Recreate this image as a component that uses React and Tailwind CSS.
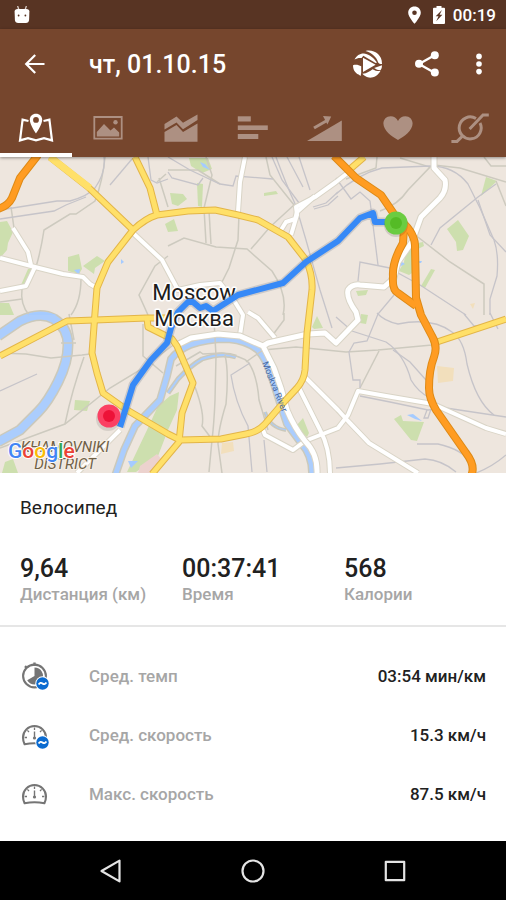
import { useState } from 'react';

// Map geometry, drawn from the bottom layer to the top
const rivers = [
  { d: 'M-2 336 L20 321 Q40 311 54 319 Q68 328 68 345 Q68 362 58 382 Q48 402 38 412 L20 430 L-2 442', w: 8 },
  { d: 'M115 476 L124 450 L135 426 L160 400 L167 376 L171 359 Q178 350 190 345 Q206 339 228 339 Q248 341 258 350 Q268 362 272 378 L280 403 L287 424 L301 443 Q313 456 312 476', w: 5 },
  { d: 'M168 393 L178 379 Q190 366 202 359 Q222 352 236 357', w: 2 },
  { d: 'M265 412 Q270 428 286 430', w: 1 },
];

const parks = [
  'M0 222 L7 221 L13 232 L8 243 L7 250 L0 258Z',
  'M68 257 L79 254 L82 269 L79 274 L68 271Z',
  'M83 266 L97 256 L105 261 L95 268 L94 274Z',
  'M28 269 L34 267 L26 285 L21 285Z',
  'M0 303 L9 303 L14 315 L0 315Z',
  'M165 224 L174 219 L178 231 L168 232Z',
  'M170 193 L183 194 L187 199 L178 206 L172 204Z',
  'M197 183 L203 184 L202 207 L198 206Z',
  'M189 158 L208 158 L212 169 L202 173 L191 166Z',
  'M264 193 L276 191 L278 194 L264 196Z',
  'M486 177 L497 181 L481 196Z',
  'M447 229 L458 220 L469 236 L463 250 L457 251 L456 242Z',
  'M407 245 L423 242 L424 246 L416 250 L417 270 L409 275 L399 271 L404 262Z',
  'M421 286 L431 269 L435 270 L425 288Z',
  'M356 291 L368 290 L366 295 L358 296Z',
  'M361 314 L368 315 L366 324 L360 323Z',
  'M312 327 L317 316 L323 328 L314 329Z',
  'M394 419 L401 415 L403 421 L424 422 L417 441 L411 440Z',
  'M75 400 L90 401 L87 411 L74 410Z',
  'M158 406 L170 396 L179 392 L177 410 L168 430 L158 456 L136 472 L127 472 L147 430Z',
  'M297 425 L303 418 L309 433 L307 437 L299 431Z',
  'M5 462 L13 459 L18 473 L2 473Z',
];

const ponds = [
  'M74 270 L80 269 L79 275Z',
  'M121 259 L124 262 L121 264Z',
  'M200 162 L205 164 L210 170 L203 167Z',
  'M399 260 L405 264 L399 267Z',
  'M418 261 L422 261 L421 263 L418 263Z',
  'M407 415 L413 414 L422 421 L415 419Z',
  'M128 461 L138 461 L131 468Z',
  'M26 315 Q40 309 57 315Z',
];

const yards = [
  'M437 366 L454 368 L453 381 L438 383Z',
  'M222 443 L233 442 L234 451 L221 454Z',
  'M470 304 L475 303 L473 309Z',
];

const railways = [
  'M104 157 Q106 172 95 188 Q88 196 70 201 L57 201 L0 210',
  'M86 197 L66 205 L54 211 L0 219',
  'M110 185 L132 159',
  'M148 157 L151 180 L157 183 L168 179',
  'M168 172 L172 178 L198 185 L203 178',
  'M168 157 L190 170 L220 184 L233 186 L236 176 L273 179',
  'M276 157 Q286 184 296 206 L306 240 L320 290 L332 328',
  'M272 157 L282 180 L302 207',
  'M287 157 L303 187 M299 157 L310 190',
  'M313 207 L326 203 L338 192 M314 209 L328 205 L338 196',
  'M336 194 Q358 174 382 168 L430 166 Q454 166 468 184 L480 208 L494 240 Q499 254 497 276 L490 299 L490 315',
  'M496 184 L478 197 L440 228 L431 245',
  'M478 200 L490 235 L506 252',
  'M336 178 L351 199 L360 192 L370 201 L378 265',
  'M358 281 L360 262 L390 268',
  'M398 273 L420 285 L466 315',
  'M394 295 L378 314 L367 341 L354 343 L349 352 L353 380 L360 380 L360 388',
  'M377 313 Q384 321 398 324 Q432 317 452 332 Q464 340 467 364 Q476 402 494 415',
  'M336 317 L352 331 L386 342 Q404 354 411 380 Q418 392 430 398',
  'M393 350 L410 362 L426 380',
  'M360 396 L390 402 L428 410 L446 408 L506 417',
  'M427 410 L424 418 L428 418 L431 409',
  'M417 444 L438 444 Q462 449 474 465',
  'M336 468 L380 464 L425 459 Q442 460 456 472',
  'M476 473 Q492 467 506 455',
  'M0 391 L37 374',
  'M250 363 L231 375 Q235 402 248 426 L252 472',
  'M264 440 L267 472',
  'M464 314 L474 326 L485 325 M490 313 L498 329',
];

const streets = [
  'M105 157 Q103 180 95 201 L76 214 L70 214 L44 230 Q41 250 36 267',
  'M11 207 L14 228',
  'M22 289 Q20 304 29 315',
  'M0 302 L22 299',
  'M81 278 Q81 302 71 315',
  'M168 256 L155 266 L139 295 L148 315',
  'M168 246 L184 238 L216 247 L247 249 L272 271 Q288 295 283 315',
  'M206 157 L212 175 L204 208 L206 243',
  'M209 211 L211 244',
  'M239 214 L238 240 L229 268 L218 290',
  'M266 157 L270 175 L294 205 L270 227 L251 249',
  'M168 170 L198 170 L220 184',
  'M0 353 L26 354 L51 358 L82 355 L90 354',
  'M84 357 Q72 390 65 424',
  'M0 448 L65 424 L110 388 L140 370 L180 340',
  'M61 343 L76 343 M69 314 L74 340',
  'M143 324 L143 356 L163 373',
  'M176 366 L200 352 L203 354 L222 353 Q242 356 248 362 Q257 374 259 400 L268 430',
  'M214 320 L216 356 L215 400 Q214 424 212 440 L209 472',
  'M195 387 Q205 414 202 426 L211 438',
  'M225 355 Q229 372 226 404 Q218 430 218 444 L222 473',
  'M280 338 L246 362 M272 336 L284 320 L284 313',
  'M263 350 L296 347 L346 352 L378 350 L432 345',
  'M379 351 L360 388',
  'M380 211 Q398 205 408 190 L430 167 L400 158',
  'M434 165 L460 168 L506 182',
  'M484 157 L491 166 L506 166 M496 181 L506 206',
  'M414 234 L450 262 L484 284 L484 315',
  'M377 157 L376 168 L346 179',
  'M157 182 L166 174 M159 178 L168 207',
];

const whiteRoads = [
  'M13 228 L28 252 L31 265',
  'M0 258 L35 267 L63 274 L83 277 L90 284 L97 288',
  'M35 267 L26 286 L0 291',
  'M133 233 L162 260 L170 275 L178 290 L200 285 L220 283 L235 302 L243 315 L240 335',
  'M245 157 L240 182 L238 212',
  'M350 171 L336 182 L315 197 L296 207 L297 215 L291 235',
  'M315 196 L297 212 L295 219 L286 222 L281 230',
  'M248 312 L258 318 L275 338',
  'M301 377 L306 378 L338 410 L348 421 L369 443 L418 473',
  'M298 386 L320 430 Q330 448 330 474',
  'M263 430 L265 435 L293 450 L305 441 L338 428 L348 415 L358 391 L386 396 L433 404 L486 428 L506 434',
  'M120 430 L77 473',
];

const wideWhiteRoads = [
  'M175 346 L191 338 L218 334 L240 336 L263 346 L274 368 L281 388 L287 410 Q294 427 305 441 Q318 454 317 474',
  'M263 346 L268 343 L308 334 L325 333 L336 343 L358 320 L356 312 Q346 298 348 290 Q352 284 360 285 L384 287 L394 278 L398 262 L412 242 L421 217 L440 198 Q447 190 445 180 L434 168 L434 157',
];

const yellowRoads = [
  'M95 313 L97 288 L108 262 L133 230 Q146 218 157 215 L188 211 L215 210 L238 215 L258 220 L288 237 L306 260 Q313 275 312 290 L307 333 L305 370 Q304 380 297 388 L283 403 L265 424 Q258 432 246 434 L221 439 L180 440 L168 434 L127 410 L103 393 L97 373 L92 353Z',
  'M50 157 L88 187 L133 230',
  'M135 157 L150 188 L157 215',
  'M0 356 L67 321 L95 320 L147 318 L166 318',
  'M147 318 L148 327 L172 339 L177 346 L193 383 L182 413 L179 442 L152 474',
  'M431 344 L506 319',
  'M364 157 L349 170',
];

const orangeRoads = [
  'M38 155 L20 178 L12 198 Q8 206 -2 209',
  'M404 228 L403 243 Q392 262 393 276 Q392 290 398 293 L416 306',
  'M334 156 L356 178 L381 195 L396 217 Q414 230 415 245 L416 298 L421 315 L432 336 Q438 346 434 357 Q429 370 429 388 Q429 398 436 410 L466 453 Q476 466 471 476',
];

const route =
  'M120 427 L133 385 L151 360 L167 343 L171 328 L178 312 L188 302 L193 302 L200 308 L206 306 L213 311 L238 295 L283 283 L306 262 L338 241 L360 218 L373 213 L375 222 L390 222';

function Roads({ paths, edge, fill, width }) {
  return (
    <g fill="none" strokeLinejoin="round">
      {paths.map((d) => (
        <path key={d} d={d} stroke={edge} strokeWidth={width + 2} />
      ))}
      {paths.map((d) => (
        <path key={d} d={d} stroke={fill} strokeWidth={width} />
      ))}
    </g>
  );
}

function RouteMap() {
  return (
    <svg
      viewBox="0 157 506 316"
      preserveAspectRatio="xMidYMid slice"
      className="block h-[316px] w-full bg-[#eee6de] font-['Roboto',sans-serif]"
      role="img"
      aria-label="Карта маршрута"
    >
      {parks.map((d) => (
        <path key={d} d={d} fill="#cddfae" />
      ))}
      {yards.map((d) => (
        <path key={d} d={d} fill="#f2dfbc" />
      ))}
      <path d="M140 466 L157 454 L162 460 L156 473 L138 473Z" fill="#ecd2ce" />
      <g fill="none">
        {rivers.map((r) => (
          <path key={r.d} d={r.d} stroke="#cbc9bb" strokeWidth={r.w + 3} />
        ))}
        {rivers.map((r) => (
          <path key={r.d} d={r.d} stroke="#abcdfd" strokeWidth={r.w} />
        ))}
        {streets.map((d) => (
          <path key={d} d={d} stroke="#cdcabf" strokeWidth="1.5" />
        ))}
        {railways.map((d) => (
          <path key={d} d={d} stroke="#c6c4c9" strokeWidth="1.3" />
        ))}
      </g>
      {ponds.map((d) => (
        <path key={d} d={d} fill="#a5cbff" />
      ))}
      <Roads paths={whiteRoads} edge="#d9d4c6" fill="#ffffff" width={4} />
      <Roads paths={wideWhiteRoads} edge="#d9d4c6" fill="#ffffff" width={5} />
      <Roads paths={yellowRoads} edge="#e3b548" fill="#ffe069" width={5} />
      <path d="M50 157 L90 188" stroke="#ffe069" strokeWidth="7" />
      <Roads paths={orangeRoads} edge="#de8a16" fill="#ff9c22" width={6} />

      {/* Route and city labels */}
      <text x="194" y="300" fontSize="22" fill="#1c1c1c" stroke="#ffffff" strokeWidth="3" strokeLinejoin="round" paintOrder="stroke" textAnchor="middle">
        Moscow
      </text>
      <path d={route} fill="none" stroke="#7d8798" strokeOpacity="0.3" strokeWidth="9" strokeLinejoin="round" />
      <path d={route} fill="none" stroke="#3689f7" strokeWidth="6" strokeLinejoin="round" />
      <text x="194" y="326" fontSize="22" fill="#1c1c1c" stroke="#ffffff" strokeWidth="3" strokeLinejoin="round" paintOrder="stroke" textAnchor="middle">
        Москва
      </text>
      <text transform="translate(262 363) rotate(68)" fontSize="9" fill="#476aa5">Moskva River</text>
      <g fill="#6f6046" stroke="#f6efe6" strokeWidth="2" paintOrder="stroke" fontSize="15" fontStyle="italic" textAnchor="middle">
        <text x="65" y="452">KHAMOVNIKI</text>
        <text x="65" y="469">DISTRICT</text>
      </g>
      <text x="8" y="458" fontSize="21" fontWeight="500" stroke="#ffffff" strokeWidth="2" paintOrder="stroke">
        <tspan fill="#4285f4">G</tspan>
        <tspan fill="#ea4335">o</tspan>
        <tspan fill="#fbbc05">o</tspan>
        <tspan fill="#4285f4">g</tspan>
        <tspan fill="#34a853">l</tspan>
        <tspan fill="#ea4335">e</tspan>
      </text>

      {/* Start and finish */}
      <circle cx="396" cy="225" r="12" fill="#000000" opacity="0.12" />
      <circle cx="396" cy="223" r="11.5" fill="#6bcc41" />
      <circle cx="396" cy="223" r="6" fill="#55bb26" />
      <circle cx="108" cy="419" r="12" fill="#000000" opacity="0.1" />
      <circle cx="109" cy="416" r="11.5" fill="#fb4063" />
      <circle cx="109" cy="416" r="6" fill="#ed1238" />
    </svg>
  );
}

function AndroidIcon() {
  return (
    <svg width="16" height="18" viewBox="0 0 16 18" fill="#ffffff">
      <path d="M3.6 0 L5 4 M12.4 0 L11 4" stroke="#d9cdc7" strokeWidth="1.3" />
      <path d="M0.6 5.6 Q0.6 3 3.6 3 H12.4 Q15.4 3 15.4 5.6 L15.1 14 Q14.8 17 11.8 17 H4.2 Q1.2 17 0.9 14Z" />
      <circle cx="4.6" cy="9.5" r="0.9" fill="#583423" />
      <circle cx="11.4" cy="9.5" r="0.9" fill="#583423" />
    </svg>
  );
}

function StatusBar() {
  return (
    <div className="flex h-[29px] items-center bg-[#583423] pr-[10px] pl-[14px] text-white">
      <AndroidIcon />
      <svg className="ml-auto" width="13" height="18" viewBox="0 0 13 18">
        <path
          fill="#ffffff"
          fillRule="evenodd"
          d="M6.5 0.5 C2.8 0.5 0.2 3.2 0.2 6.7 C0.2 11 6.5 17.7 6.5 17.7 C6.5 17.7 12.8 11 12.8 6.7 C12.8 3.2 10.2 0.5 6.5 0.5Z M6.5 4.4 A2.3 2.3 0 1 1 6.5 9 A2.3 2.3 0 1 1 6.5 4.4Z"
        />
      </svg>
      <svg className="ml-3" width="12" height="18" viewBox="0 0 12 18">
        <path d="M3.5 0 H8.5 V1.7 H11 Q12 1.7 12 2.7 V17 Q12 18 11 18 H1 Q0 18 0 17 V2.7 Q0 1.7 1 1.7 H3.5Z" fill="#ffffff" />
        <path d="M9 4 L2.7 10.3 H5.5 L3.2 15.2 L9.4 8.8 H6.6Z" fill="#583423" />
      </svg>
      <span className="ml-2 pt-[2px] text-[17px] leading-none font-medium">00:19</span>
    </div>
  );
}

function Toolbar() {
  return (
    <div className="flex h-[70px] items-center pr-[21px] pl-[23px] text-white">
      <button type="button" aria-label="Назад">
        <svg width="24" height="24" viewBox="0 0 24 24" fill="none" stroke="#ffffff" strokeWidth="2.2">
          <path d="M12.2 3 L3.2 12 L12.2 21 M3.4 12 H21.5" />
        </svg>
      </button>
      <h1 className="ml-[42px] flex-1 pt-[2px] text-[25px] leading-8 font-medium">чт, 01.10.15</h1>
      <button type="button" aria-label="Воспроизвести маршрут">
        <svg width="30" height="28" viewBox="0 0 30 28" fill="#ffffff">
          <path d="M12.5 1 C21 -1 29.4 5 29 14 C27.5 14.4 26.2 13.5 25.2 12.4 C23.5 7 19 3 12.5 1Z" />
          <path d="M1.5 9.5 C3.5 5.5 7 3.2 11 3.4 C17 4.5 21.5 8.5 24 12.6 L22.6 13 L10.3 5.8 L8.6 8 C6 7.6 3.5 8.4 1.5 9.5Z" />
          <path d="M0 15.2 C3 14.2 6 15 8.2 16.3 V23 L7.6 26 L5.6 24.6 C2 23 0 19.5 0 15.2Z" />
          <path d="M10 7.8 L22.6 14.8 L10 22Z" />
          <path d="M21.2 18 L29 15.2 Q29 18.5 27.6 20.2 Q24.5 20.5 21.2 18Z" />
          <path d="M9.4 23.8 C14 23.4 17 21 19.6 19.2 C22 20.8 24.6 21.2 27.4 21 C25 25.6 20.5 28 16 27.6 C13 27 10.8 25.6 9.4 23.8Z" />
        </svg>
      </button>
      <button type="button" aria-label="Поделиться" className="ml-8">
        <svg width="24" height="26" viewBox="0 0 24 26" fill="#ffffff">
          <path d="M4 13 L20 4 M4 13 L20 22" stroke="#ffffff" strokeWidth="2.4" />
          <circle cx="4" cy="12.8" r="4" />
          <circle cx="19.8" cy="4.3" r="4" />
          <circle cx="19.8" cy="21.5" r="4" />
        </svg>
      </button>
      <button type="button" aria-label="Ещё" className="ml-[34px]">
        <svg width="12" height="22" viewBox="0 0 12 22" fill="#ffffff">
          <circle cx="6" cy="3.4" r="2.8" />
          <circle cx="6" cy="11" r="2.8" />
          <circle cx="6" cy="18.6" r="2.8" />
        </svg>
      </button>
    </div>
  );
}

const tabs = [
  {
    name: 'Карта',
    icon: (
      <>
        <path d="M12.5 9 L6.6 7.6 L4 28.4 L12 26.2 L20 28.4 L28 26.2 L36 28.4 L33.4 7.6 L27.5 9" fill="none" stroke="currentColor" strokeWidth="2.2" />
        <path
          fillRule="evenodd"
          d="M20 1.8 C16.4 1.8 13.8 4.4 13.8 7.8 C13.8 13 20 21.5 20 21.5 C20 21.5 26.2 13 26.2 7.8 C26.2 4.4 23.6 1.8 20 1.8Z M20 5 A2.9 2.9 0 1 1 20 10.8 A2.9 2.9 0 1 1 20 5Z"
        />
      </>
    ),
  },
  {
    name: 'Фото',
    icon: (
      <>
        <path d="M6.3 5 H33.7 V26.6 H6.3Z" fill="none" stroke="currentColor" strokeWidth="1.8" />
        <path d="M8.8 24.5 V20 L16 12 L22.5 18.5 L26 15.5 L31.2 20.5 V24.5Z" />
        <circle cx="27.5" cy="10.2" r="2.2" />
      </>
    ),
  },
  {
    name: 'Графики',
    icon: (
      <>
        <path d="M3.5 12 L15.5 4.6 L22 10.8 L36.5 2.5 V8 L22 17.2 L15.5 10.6 L3.5 17.6Z" />
        <path d="M3.5 20 L15.5 13 L22 20 L36.5 11.4 V29.8 H3.5Z" />
      </>
    ),
  },
  {
    name: 'Интервалы',
    icon: (
      <>
        <rect x="4.8" y="4.3" width="13" height="5.2" />
        <rect x="4.8" y="13.4" width="30" height="4.6" />
        <rect x="4.8" y="22" width="20.5" height="5" />
      </>
    ),
  },
  {
    name: 'Подъём',
    icon: (
      <>
        <path d="M2 29 L36.8 8.6 V29Z" />
        <path d="M9 16 L22.5 8.2" stroke="currentColor" strokeWidth="3" />
        <path d="M18 4 L26.2 4.6 L22.4 12.5Z" />
      </>
    ),
  },
  {
    name: 'Пульс',
    icon: <path d="M20 28 C14 25 5.4 18.5 5.4 11.6 C5.4 7.4 8.4 4.2 12.6 4.2 C16 4.2 18.6 6.2 20 9 C21.4 6.2 24 4.2 27.4 4.2 C31.6 4.2 34.6 7.4 34.6 11.6 C34.6 18.5 26 25 20 28Z" />,
  },
  {
    name: 'Каденс',
    icon: (
      <g fill="none" stroke="currentColor">
        <path d="M26 6.6 A11 11 0 1 0 30 11" strokeWidth="3" />
        <path d="M19.6 17 L33 3 H38.8" strokeWidth="3" />
        <path d="M12.6 24 L7 29.4 H1.4" strokeWidth="3" />
      </g>
    ),
  },
];

function Tabs({ active, onChange }) {
  return (
    <nav className="grid grid-cols-7">
      {tabs.map((tab, idx) => (
        <button
          key={tab.name}
          type="button"
          aria-label={tab.name}
          aria-pressed={idx === active}
          onClick={() => onChange(idx)}
          className={
            idx === active
              ? 'flex h-[58px] items-center justify-center border-b-4 border-white pt-1 text-white'
              : 'flex h-[58px] items-center justify-center border-b-4 border-transparent pt-1 text-[#ad9082]'
          }
        >
          <svg width="40" height="32" viewBox="0 0 40 32" fill="currentColor">
            {tab.icon}
          </svg>
        </button>
      ))}
    </nav>
  );
}

function AverageBadge() {
  return (
    <>
      <circle cx="21.5" cy="21.5" r="7.2" fill="#ffffff" />
      <circle cx="21.5" cy="21.5" r="6.2" fill="#0b6bd0" />
      <path d="M17.6 22.5 Q19.4 19.7 21.5 21.5 Q23.6 23.3 25.4 20.5" fill="none" stroke="#ffffff" strokeWidth="1.8" />
    </>
  );
}

function PaceIcon() {
  return (
    <svg width="29" height="30" viewBox="-1 0 29 30">
      <circle cx="13.5" cy="14" r="11.4" fill="none" stroke="#757575" strokeWidth="2.1" />
      <path d="M13.5 0.4 V4 M4 4.2 L6 6.2" stroke="#757575" strokeWidth="2.4" />
      <path d="M13.5 5.5 A8.5 8.5 0 1 1 6.2 18.3 L13.5 14Z" fill="#757575" />
      <AverageBadge />
    </svg>
  );
}

function SpeedIcon({ average }) {
  return (
    <svg width="29" height="30" viewBox="-1 0 29 30">
      <g fill="none" stroke="#757575">
        <path d="M3.6 23.2 Q2 20 2 16.5 A11.5 11.5 0 0 1 25 16.5 Q25 20 23.4 23.2 Q13.5 21.4 3.6 23.2Z" strokeWidth="2.1" />
        <path d="M13.5 6.5 V9 M6.4 9.4 L8 11 M20.6 9.4 L19 11 M3.6 16.5 H6 M21 16.5 H23.4" strokeWidth="1.3" />
        <path d="M13.5 10.5 V17.5" strokeWidth="1.4" />
      </g>
      <circle cx="13.5" cy="17" r="1.6" fill="#757575" />
      {average && <AverageBadge />}
    </svg>
  );
}

const totals = [
  { label: 'Дистанция (км)', value: '9,64' },
  { label: 'Время', value: '00:37:41' },
  { label: 'Калории', value: '568' },
];

const details = [
  { label: 'Сред. темп', value: '03:54 мин/км', icon: <PaceIcon /> },
  { label: 'Сред. скорость', value: '15.3 км/ч', icon: <SpeedIcon average /> },
  { label: 'Макс. скорость', value: '87.5 км/ч', icon: <SpeedIcon /> },
];

function NavigationBar() {
  return (
    <footer className="flex h-[59px] items-center justify-center gap-[118px] bg-black">
      <button type="button" aria-label="Назад">
        <svg width="24" height="24" viewBox="0 0 24 24" fill="none" stroke="#e4e4e4" strokeWidth="2.2" strokeLinejoin="round">
          <path d="M20.5 1.6 V22.4 L2.5 12Z" />
        </svg>
      </button>
      <button type="button" aria-label="Домой">
        <svg width="24" height="24" viewBox="0 0 24 24" fill="none" stroke="#e4e4e4" strokeWidth="2.2">
          <circle cx="12" cy="12" r="10.5" />
        </svg>
      </button>
      <button type="button" aria-label="Обзор">
        <svg width="24" height="24" viewBox="0 0 24 24" fill="none" stroke="#e4e4e4" strokeWidth="2.2" strokeLinejoin="round">
          <rect x="2.8" y="2.8" width="18.4" height="18.4" />
        </svg>
      </button>
    </footer>
  );
}

function App() {
  const [activeTab, setActiveTab] = useState(0);

  return (
    <div className="flex min-h-screen flex-col bg-white font-['Roboto','Noto_Sans',sans-serif] text-[#212121]">
      <StatusBar />
      <header className="relative bg-[#76462d] shadow-[0_1px_3px_rgba(0,0,0,0.4)]">
        <Toolbar />
        <Tabs active={activeTab} onChange={setActiveTab} />
      </header>

      <main className="flex-1">
        <RouteMap />

        {/* Totals */}
        <section className="border-b-2 border-[#e6e6e6] pt-[21px] pb-[21px] pl-5">
          <h2 className="text-[19px] leading-7">Велосипед</h2>
          <dl className="mt-8 grid grid-cols-3">
            {totals.map((item) => (
              <div key={item.label} className="flex flex-col-reverse">
                <dt className="text-[17px] leading-5 font-medium text-[#a6a6a6]">{item.label}</dt>
                <dd className="text-[25px] leading-[30px] font-medium">{item.value}</dd>
              </div>
            ))}
          </dl>
        </section>

        {/* Details */}
        <dl className="px-5 pt-5 pb-4">
          {details.map((item) => (
            <div key={item.label} className="flex h-[59px] items-center text-[17px] font-medium">
              {item.icon}
              <dt className="ml-10 flex-1 text-[#a6a6a6]">{item.label}</dt>
              <dd>{item.value}</dd>
            </div>
          ))}
        </dl>
      </main>

      <NavigationBar />
    </div>
  );
}

export default App;
